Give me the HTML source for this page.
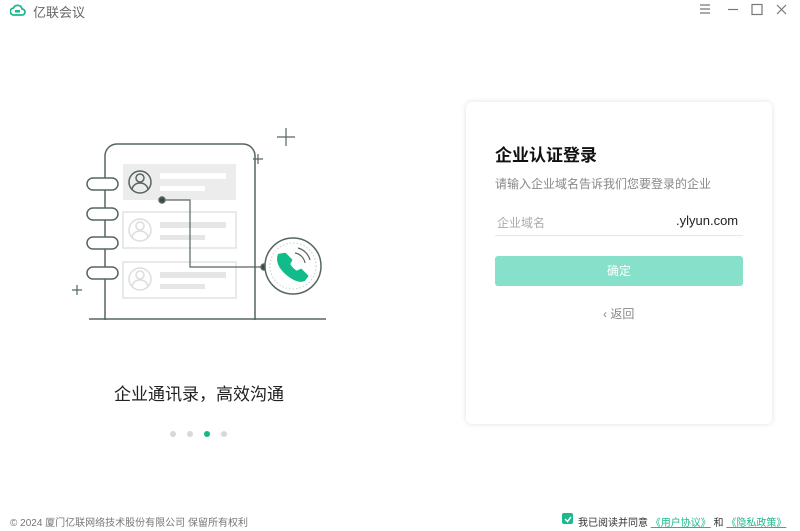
<!DOCTYPE html>
<html><head><meta charset="utf-8"><style>
*{margin:0;padding:0;box-sizing:border-box}
body{width:800px;height:531px;background:#fff;position:relative;overflow:hidden;font-family:"Liberation Sans","Noto Sans CJK SC",sans-serif;color:#333}
.a{position:absolute}
</style></head><body>
<svg class="a" style="left:10px;top:3px" width="16" height="14" viewBox="0 0 16 14"><path d="M4 12h8a3 3 0 0 0 0-6 4.5 4.5 0 0 0-8.5-1A3.5 3.5 0 0 0 4 12z" fill="none" stroke="#1cb98d" stroke-width="1.8"/><rect x="5" y="7" width="5" height="2.5" fill="#1cb98d"/></svg>
<div class="a" style="left:33px;top:2px;font-size:13px;color:#666">亿联会议</div>
<svg class="a" style="left:697px;top:3px" width="100" height="14"><g stroke="#777" stroke-width="1.2" fill="none"><path d="M3 2h10M3 6h10M3 10h10"/><path d="M31 6.5h10"/><rect x="55" y="1.5" width="10" height="10"/><path d="M80 2l9 9M89 2l-9 9"/></g></svg>

<svg class="a" style="left:60px;top:120px" width="280" height="210" viewBox="0 0 280 210" fill="none" stroke="#56665f" stroke-width="1.5">
<path d="M45 200V36a12 12 0 0 1 12-12h126a12 12 0 0 1 12 12v164"/>
<path d="M29 199h237"/>
<g><rect x="27" y="58" width="31" height="12" rx="6" fill="#fff"/><rect x="27" y="88" width="31" height="12" rx="6" fill="#fff"/><rect x="27" y="117" width="31" height="12" rx="6" fill="#fff"/><rect x="27" y="147" width="31" height="12" rx="6" fill="#fff"/></g>
<rect x="63" y="44" width="113" height="36" fill="#ececec" stroke="none"/>
<rect x="63" y="92" width="113" height="36" stroke="#e2e2e2"/>
<rect x="63" y="142" width="113" height="36" stroke="#e2e2e2"/>
<g stroke="none" fill="#e6e6e6"><rect x="100" y="53" width="66" height="6" fill="#fff"/><rect x="100" y="66" width="45" height="5" fill="#fff"/><rect x="100" y="102" width="66" height="6"/><rect x="100" y="115" width="45" height="5"/><rect x="100" y="152" width="66" height="6"/><rect x="100" y="164" width="45" height="5"/></g>
<circle cx="80" cy="62" r="11"/><circle cx="80" cy="58" r="4"/><path d="M72 70a8 7 0 0 1 16 0"/>
<g stroke="#ddd"><circle cx="80" cy="110" r="11"/><circle cx="80" cy="106" r="4"/><path d="M72 118a8 7 0 0 1 16 0"/><circle cx="80" cy="159" r="11"/><circle cx="80" cy="155" r="4"/><path d="M72 167a8 7 0 0 1 16 0"/></g>
<path d="M102 80h28v67h74" stroke-width="1.2"/>
<circle cx="102" cy="80" r="3" fill="#3c4a44"/><circle cx="204" cy="147" r="3" fill="#3c4a44"/>
<circle cx="233" cy="146" r="28" fill="#fff"/><circle cx="233" cy="146" r="23" stroke="#ccc" stroke-dasharray="1.5 2" stroke-width="1"/>
<path d="M219 135c-2 5 0 12 7 18s13 9 18 7l3-4-6-6-4 2c-3-1-7-5-8-8l2-4-6-6z" fill="#12bb8a" stroke="#12bb8a" stroke-width="2.5" stroke-linejoin="round"/>
<path d="M235 133a12 12 0 0 1 10 10M238 128a17 17 0 0 1 12 12" stroke-width="1.2"/>
<path d="M226 8v18M217 17h18M198 34v10M193 39h10M17 165v10M12 170h10" stroke-width="1.2"/>
</svg>
<div class="a" style="left:0;width:398px;top:380px;text-align:center;font-size:17px;color:#222">企业通讯录，高效沟通</div>
<div class="a" style="left:170px;top:431px;width:6px;height:6px;border-radius:3px;background:#d8d8d8"></div>
<div class="a" style="left:187px;top:431px;width:6px;height:6px;border-radius:3px;background:#d8d8d8"></div>
<div class="a" style="left:204px;top:431px;width:6px;height:6px;border-radius:3px;background:#12b98c"></div>
<div class="a" style="left:221px;top:431px;width:6px;height:6px;border-radius:3px;background:#d8d8d8"></div>

<div class="a" style="left:466px;top:102px;width:306px;height:322px;border-radius:6px;box-shadow:0 0 6px rgba(0,0,0,.12);background:#fff"></div>
<div class="a" style="left:495px;top:141px;font-size:17px;font-weight:bold;color:#111">企业认证登录</div>
<div class="a" style="left:495px;top:175px;font-size:12px;color:#888">请输入企业域名告诉我们您要登录的企业</div>
<div class="a" style="left:497px;top:214px;font-size:12px;color:#aaa">企业域名</div>
<div class="a" style="left:676px;top:213px;font-size:13px;color:#222">.ylyun.com</div>
<div class="a" style="left:495px;top:235px;width:248px;height:1px;background:#e6e6e6"></div>
<div class="a" style="left:495px;top:256px;width:248px;height:30px;border-radius:3px;background:#86e0ca;color:#fff;font-size:12px;text-align:center;line-height:30px">确定</div>
<div class="a" style="left:603px;top:305px;font-size:12px;color:#888">‹ 返回</div>

<div class="a" style="left:10px;top:514px;font-size:10px;color:#777">© 2024 厦门亿联网络技术股份有限公司 保留所有权利</div>
<div class="a" style="left:562px;top:513px;width:11px;height:11px;border-radius:2px;background:#1cb98d"></div>
<svg class="a" style="left:563px;top:514px" width="10" height="10"><path d="M2 5l2.5 2.5L8 3" stroke="#fff" stroke-width="1.5" fill="none"/></svg>
<div class="a" style="left:578px;top:514px;font-size:10px;color:#333;white-space:nowrap">我已阅读并同意 <span style="color:#1cb98d;text-decoration:underline">《用户协议》</span> 和 <span style="color:#1cb98d;text-decoration:underline">《隐私政策》</span></div>
</body></html>
